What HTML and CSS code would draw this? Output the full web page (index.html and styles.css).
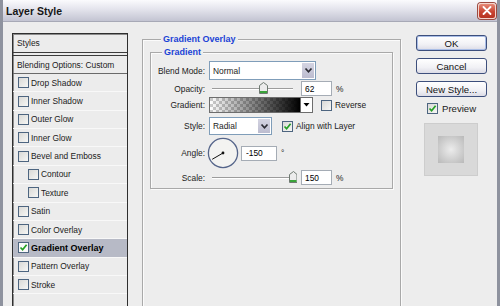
FILE: index.html
```html
<!DOCTYPE html>
<html lang="en">
<head>
    <meta charset="UTF-8">
    <meta name="viewport" content="width=device-width, initial-scale=1.0">
    <title>Layer Style</title>
    <link rel="stylesheet" href="styles.css">
</head>
<body>
    <div class="window">
        <div class="titlebar">
            <h1>Layer Style</h1>
            <button class="close" type="button" aria-label="Close">
                <svg width="10" height="9" viewBox="0 0 10 9"><path d="M1.5 1 L8.5 8 M8.5 1 L1.5 8" stroke="#fff" stroke-width="1.8" stroke-linecap="round"/></svg>
            </button>
        </div>

        <div class="content">
            <ul class="styles">
                <li class="head">Styles</li>
                <li class="blend">Blending Options: Custom</li>
                <li><span class="check"></span>Drop Shadow</li>
                <li><span class="check"></span>Inner Shadow</li>
                <li><span class="check"></span>Outer Glow</li>
                <li><span class="check"></span>Inner Glow</li>
                <li><span class="check"></span>Bevel and Emboss</li>
                <li class="sub"><span class="check"></span>Contour</li>
                <li class="sub"><span class="check"></span>Texture</li>
                <li><span class="check"></span>Satin</li>
                <li><span class="check"></span>Color Overlay</li>
                <li class="active"><span class="check"><svg width="9" height="9" viewBox="0 0 9 9"><path d="M1.5 4.5 L3.6 6.8 L7.6 1.8" fill="none" stroke="#23a023" stroke-width="1.7"/></svg></span>Gradient Overlay</li>
                <li><span class="check"></span>Pattern Overlay</li>
                <li><span class="check"></span>Stroke</li>
            </ul>

            <fieldset class="group outer">
                <legend>Gradient Overlay</legend>
                <fieldset class="group inner">
                    <legend>Gradient</legend>

                    <div class="row blend-row">
                        <label>Blend Mode:</label>
                        <div class="select wide">
                            <span>Normal</span>
                            <span class="drop"><svg width="9" height="7" viewBox="0 0 9 7"><path d="M1.5 1.5 L4.5 4.8 L7.5 1.5" fill="none" stroke="#2b2b33" stroke-width="1.7"/></svg></span>
                        </div>
                    </div>

                    <div class="row field-row">
                        <label>Opacity:</label>
                        <svg class="slider" width="88" height="15" viewBox="0 0 88 15">
                            <rect x="3" y="7" width="81" height="1" fill="#9c9c9c"/>
                            <rect x="3" y="8" width="81" height="1" fill="#ffffff"/>
                            <path d="M50.5 12.5 V4.5 L54.5 1.5 L58.5 4.5 V12.5 Z" fill="#ececec" stroke="#6f7a72"/>
                            <rect x="51" y="10" width="7" height="2" fill="#3aa43a"/>
                        </svg>
                        <input class="num" type="text" value="62">
                        <span class="unit">%</span>
                    </div>

                    <div class="row gradient-row">
                        <label>Gradient:</label>
                        <div class="gradient">
                            <span class="ramp"></span>
                            <span class="ramp-drop"><svg width="7" height="4" viewBox="0 0 7 4"><path d="M0.5 0 H6.5 L3.5 3.5 Z" fill="#000"/></svg></span>
                        </div>
                        <span class="check gap-reverse"></span>
                        <span class="opt">Reverse</span>
                    </div>

                    <div class="row style-row">
                        <label>Style:</label>
                        <div class="select narrow">
                            <span>Radial</span>
                            <span class="drop"><svg width="9" height="7" viewBox="0 0 9 7"><path d="M1.5 1.5 L4.5 4.8 L7.5 1.5" fill="none" stroke="#2b2b33" stroke-width="1.7"/></svg></span>
                        </div>
                        <span class="check gap-align"><svg width="9" height="9" viewBox="0 0 9 9"><path d="M1.5 4.5 L3.6 6.8 L7.6 1.8" fill="none" stroke="#23a023" stroke-width="1.7"/></svg></span>
                        <span class="opt">Align with Layer</span>
                    </div>

                    <div class="row angle-row">
                        <label>Angle:</label>
                        <svg class="dial" width="32" height="32" viewBox="0 0 32 32">
                            <circle cx="16" cy="16" r="14.6" fill="#f3f3f1" stroke="#55658a" stroke-width="1.3"/>
                            <line x1="16" y1="16" x2="5.2" y2="22.3" stroke="#111" stroke-width="1"/>
                            <circle cx="16" cy="16" r="1.4" fill="#111"/>
                        </svg>
                        <input class="num angle" type="text" value="-150">
                        <span class="unit">°</span>
                    </div>

                    <div class="row field-row">
                        <label>Scale:</label>
                        <svg class="slider" width="88" height="15" viewBox="0 0 88 15">
                            <rect x="3" y="7" width="81" height="1" fill="#9c9c9c"/>
                            <rect x="3" y="8" width="81" height="1" fill="#ffffff"/>
                            <path d="M80.5 12.5 V4.5 L84.5 1.5 L88 4.5 V12.5 Z" fill="#ececec" stroke="#6f7a72"/>
                            <rect x="81" y="10" width="6.5" height="2" fill="#3aa43a"/>
                        </svg>
                        <input class="num" type="text" value="150">
                        <span class="unit">%</span>
                    </div>
                </fieldset>
            </fieldset>

            <div class="actions">
                <button class="btn default" type="button">OK</button>
                <button class="btn" type="button">Cancel</button>
                <button class="btn" type="button">New Style...</button>
                <div class="preview-toggle">
                    <span class="check"><svg width="9" height="9" viewBox="0 0 9 9"><path d="M1.5 4.5 L3.6 6.8 L7.6 1.8" fill="none" stroke="#23a023" stroke-width="1.7"/></svg></span>
                    <span>Preview</span>
                </div>
                <div class="swatch"><span class="swatch-inner"></span></div>
            </div>
        </div>
    </div>
</body>
</html>
```

FILE: styles.css
```css
body {
    margin: 0;
    font-family: "Liberation Sans", Arial, sans-serif;
    font-size: 8.4px;
    color: #1b1b1b;
    background: #ededed;
}
.window {
    width: 500px;
    height: 306px;
    box-sizing: border-box;
    border-left: 3px solid #8e929e;
    border-right: 3px solid #8e929e;
    background: #ededed;
    overflow: hidden;
}
.titlebar {
    height: 21px;
    display: flex;
    align-items: center;
    justify-content: space-between;
    padding: 0 1px 0 3px;
    background: linear-gradient(#fbfbfd, #e6e6ee 40%, #c3c4d2);
    border-bottom: 1px solid #a7a9b6;
}
.titlebar h1 {
    margin: 0;
    font-size: 10.5px;
    font-weight: bold;
    color: #161616;
}
.close {
    width: 18px;
    height: 16px;
    padding: 0;
    display: flex;
    align-items: center;
    justify-content: center;
    border: 1px solid #f4d4cc;
    border-radius: 3px;
    background: linear-gradient(#e68a78, #c94431 55%, #b63422);
    box-shadow: 0 0 0 1px #9c4a40;
}

.content {
    display: flex;
    align-items: flex-start;
    padding: 11px 0 0 9px;
}

/* left column: list of effects */
.styles {
    width: 116px;
    height: 290px;
    box-sizing: border-box;
    margin: 0 14px 0 0;
    padding: 0;
    list-style: none;
    border: 1px solid #2f2f2f;
    box-shadow: inset 1px 1px 0 #8c8c8c;
    background: #ececec;
}
.styles li {
    height: 18.36px;
    box-sizing: border-box;
    display: flex;
    align-items: center;
    padding-left: 5px;
    border-bottom: 1px solid #f8f8f8;
    white-space: nowrap;
}
.styles li.head {
    height: 19px;
    padding-left: 4px;
    border-bottom: 1px solid #3c3c3c;
}
.styles li.blend {
    height: 19px;
    margin-top: 2px;
    padding-left: 4px;
    border-top: 1px solid #3c3c3c;
    border-bottom: 1px solid #6a6a6a;
}
.styles li.sub {
    padding-left: 15px;
}
.styles li.active {
    background: #b7bac6;
    font-weight: bold;
    font-size: 9px;
    color: #000;
}

.check {
    width: 11px;
    height: 11px;
    box-sizing: border-box;
    flex: none;
    display: inline-flex;
    align-items: center;
    justify-content: center;
    margin-right: 2px;
    border: 1px solid #4d6580;
    background: linear-gradient(135deg, #d9d9d6, #f7f7f5);
}
.styles li.active .check {
    background: #fafafa;
}

/* middle: group boxes */
.group {
    margin: 0;
    padding: 0;
    box-sizing: border-box;
    border: 1px solid #a9a9a9;
    box-shadow: inset 1px 1px 0 #fbfbfb, 1px 1px 0 #fbfbfb;
}
.group legend {
    margin-left: 11px;
    padding: 0 2px;
    font-size: 9px;
    line-height: 12px;
    font-weight: bold;
    color: #1b43d6;
    background: #ededed;
}
.outer {
    width: 259px;
    height: 290px;
    padding: 1px 7px 0 7px;
}
.inner {
    width: 100%;
    padding: 3px 0 3px 0;
}

.row {
    display: flex;
    align-items: center;
}
.row label {
    width: 54px;
    flex: none;
    margin-right: 4px;
    text-align: right;
    white-space: nowrap;
}
.blend-row { height: 19px; }
.field-row { height: 15px; margin-top: 1px; }
.gradient-row { height: 16px; margin-top: 1px; }
.style-row { height: 18px; margin-top: 4px; }
.angle-row { height: 32px; margin-top: 2px; }

.select {
    height: 100%;
    box-sizing: border-box;
    display: flex;
    align-items: center;
    justify-content: space-between;
    padding-left: 3px;
    border: 1px solid #7f9db9;
    background: #fff;
}
.select.wide { width: 107px; }
.select.narrow { width: 63px; }
.select .drop {
    width: 14px;
    height: 100%;
    box-sizing: border-box;
    display: flex;
    align-items: center;
    justify-content: center;
    border: 1px solid #fff;
    background: linear-gradient(#d4d4e2, #bcbccf);
}

.slider {
    flex: none;
}
.num {
    width: 31px;
    height: 15px;
    box-sizing: border-box;
    margin: 0 0 0 4px;
    padding: 0 0 0 3px;
    border: 1px solid #a5acb5;
    background: #fff;
    font: inherit;
    color: #000;
    outline: none;
}
.num.angle {
    width: 36px;
    margin-left: 2px;
    padding-left: 4px;
}
.unit {
    margin-left: 4px;
}

.gradient {
    height: 16px;
    display: flex;
    border: 1px solid #6d6d6d;
    box-sizing: border-box;
}
.ramp {
    width: 90px;
    height: 100%;
    background:
        linear-gradient(to right, rgba(0, 0, 0, 0), #000),
        repeating-conic-gradient(#ffffff 0 25%, #cccccc 0 50%) 0 0 / 6px 6px;
}
.ramp-drop {
    width: 11px;
    height: 100%;
    display: flex;
    align-items: center;
    justify-content: center;
    border-left: 1px solid #6d6d6d;
    background: #fff;
}
.gap-reverse { margin-left: 8px; }
.gap-align { margin-left: 10px; }
.opt {
    margin-left: 1px;
    white-space: nowrap;
}
.dial {
    margin-left: -2px;
    flex: none;
}

/* right column: buttons and preview */
.actions {
    width: 71px;
    margin-left: 15px;
    margin-top: 2px;
    display: flex;
    flex-direction: column;
}
.btn {
    height: 16px;
    margin-bottom: 7px;
    padding: 0;
    border: 1px solid #3d4f7c;
    border-radius: 3px;
    background: linear-gradient(#ffffff, #f1f1f5 60%, #dcdce6);
    font-family: "Liberation Sans", Arial, sans-serif;
    font-size: 9.6px;
    color: #111;
}
.btn.default {
    box-shadow: inset 0 0 0 1px #a9bde6;
}
.preview-toggle {
    display: flex;
    align-items: center;
    margin: -1px 0 0 11px;
    font-size: 9.6px;
}
.preview-toggle .check {
    margin-right: 4px;
}
.swatch {
    width: 54px;
    height: 53px;
    box-sizing: border-box;
    margin: 9px 0 0 8px;
    display: flex;
    align-items: center;
    justify-content: center;
    border: 1px solid #cdcdcd;
    background: #d9d9d9;
}
.swatch-inner {
    width: 26px;
    height: 27px;
    background: radial-gradient(circle, #ececec 0%, #c8c8c8 70%, #b9b9b9 100%);
}
```
